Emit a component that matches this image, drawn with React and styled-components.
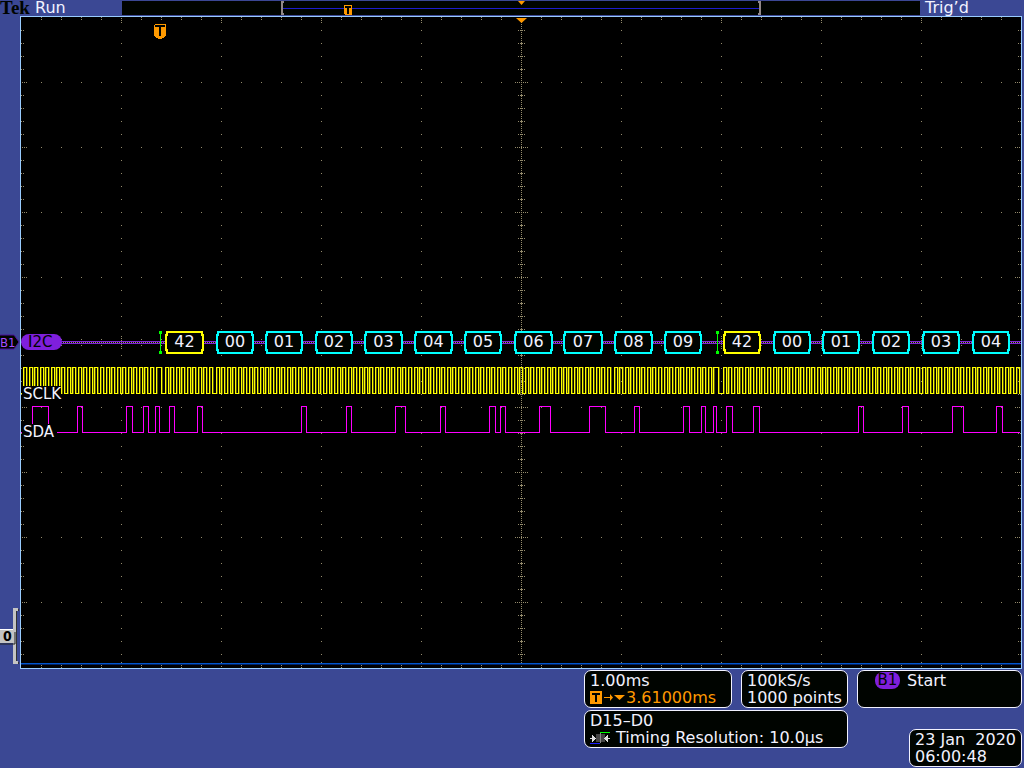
import React from 'react';
import styled, { createGlobalStyle } from 'styled-components';

const color = {
  chassis: '#3b4894',
  ink: '#f2f2ff',
  panel: '#000400',
  frame: '#99ccff',
  dot: '#948b6c',
  orange: '#ff9900',
  purple: '#7f1fdd',
  yellow: '#ffff00',
  cyan: '#00ffff',
  magenta: '#ff00ff',
  green: '#00ff00',
};

const sans = '"DejaVu Sans", "Liberation Sans", sans-serif';

const GlobalStyle = createGlobalStyle`
  * { box-sizing: border-box; }
  body {
    margin: 0;
    background: ${color.chassis};
    color: ${color.ink};
    font-family: ${sans};
    font-size: 16px;
    line-height: 16px;
  }
`;

const Screen = styled.main`
  display: flex;
  flex-direction: column;
  min-height: 100vh;
  background: ${color.chassis};
`;

const Header = styled.header`
  display: grid;
  grid-template-columns: 122px 1fr 104px;
  height: 16px;
  white-space: nowrap;
`;

const Brand = styled.div`
  display: flex;
  gap: 4px;
`;

const Logo = styled.span`
  width: 31px;
  color: ${color.panel};
  font-family: "Liberation Serif", serif;
  font-size: 19px;
  font-weight: bold;
`;

const RunState = styled.span`
  line-height: 15px;
`;

const TriggerState = styled.span`
  padding-left: 5px;
  line-height: 15px;
`;

const Overview = styled.svg`
  display: block;
  width: 100%;
  height: 14px;
  margin-top: 1px;
  background: ${color.panel};
`;

const Scope = styled.section`
  display: grid;
  grid-template-columns: 20px 1fr;
  padding-right: 2px;
`;

const Rail = styled.aside`
  display: grid;
  grid-template-rows: 1fr 17px 1fr;
`;

const BusHandle = styled.svg`
  grid-row: 2;
  display: block;
`;

const GroupHandle = styled.svg`
  grid-row: 3;
  align-self: end;
  display: block;
  margin-bottom: 4px;
`;

const PlotFrame = styled.div`
  border: 1px solid ${color.frame};
  background: #000;
`;

const Plot = styled.svg`
  display: block;
  width: 100%;
  height: auto;
`;

const Footer = styled.footer`
  display: flex;
  align-items: flex-start;
  justify-content: flex-end;
  gap: 9px;
  padding: 1px 2px 2px;
`;

const Readouts = styled.div`
  display: grid;
  grid-template-columns: 148px 107px;
  gap: 2px 9px;
`;

const SideColumn = styled.div`
  display: flex;
  flex-direction: column;
  align-items: flex-end;
  gap: 21px;
`;

const Box = styled.div`
  grid-column: ${(p) => (p.$wide ? '1 / -1' : 'auto')};
  width: ${(p) => p.$width || 'auto'};
  height: 38px;
  padding: 1px 0 0 5px;
  border: 1px solid ${color.ink};
  border-radius: 7px;
  background: ${color.panel};
  white-space: pre;
`;

const Line = styled.div`
  display: flex;
  align-items: center;
  height: 17px;
  gap: ${(p) => p.$gap || '0'};
  color: ${(p) => (p.$accent ? color.orange : 'inherit')};
`;

const EventLine = styled(Line)`
  padding-left: 12px;
`;

const BusBadge = styled.span`
  width: 25px;
  height: 17px;
  border-radius: 8px;
  background: ${color.purple};
  color: ${color.panel};
  font-size: 15px;
  line-height: 17px;
  text-align: center;
`;

/* Plot units: 100 per horizontal division, 65 per vertical division. */
const W = 1000;
const H = 651;
const CX = 500;
const CY = 325;

function graticulePath() {
  let d = '';
  const dot = (x, y) => {
    d += `M${x} ${y}h1v1h-1z`;
  };
  for (let y = 13; y < 650; y += 13) {
    const major = y % 65 === 0;
    for (let x = 100; x < W; x += 100) dot(x, y);
    if (major) for (let x = 20; x < W; x += 20) dot(x, y);
    (major ? [1, 3, 5] : [0, 2]).forEach((x) => {
      dot(x, y);
      dot(W - 1 - x, y);
    });
    (major ? [-6, -4, -2, 2, 4, 6] : [-3, -1, 1, 3]).forEach((o) => dot(CX + o, y));
  }
  for (let x = 20; x < W; x += 20) {
    const major = x % 100 === 0;
    (major ? [1, 3, 5] : [0, 2]).forEach((y) => {
      dot(x, y);
      dot(x, H - 1 - y);
    });
    (major ? [-6, -4, -2, 2, 4, 6] : [-3, 3]).forEach((o) => dot(x, CY + o));
  }
  for (let y = 1; y < H; y += 2) dot(CX, y);
  for (let x = 0; x < W; x += 2) dot(x, CY);
  return d;
}

function pulsePath(pulses, high, low, end) {
  return (
    pulses.reduce((d, [rise, fall]) => `${d}H${rise + 0.5}V${high}H${fall + 0.5}V${low}`, `M0 ${low}`) + `H${end}`
  );
}

const packets = [
  [144, 39, '42', true],
  [195, 38, '00'],
  [244, 38, '01'],
  [294, 38, '02'],
  [343, 39, '03'],
  [393, 39, '04'],
  [443, 38, '05'],
  [493, 39, '06'],
  [542, 40, '07'],
  [593, 39, '08'],
  [643, 38, '09'],
  [702, 38, '42', true],
  [752, 38, '00'],
  [801, 38, '01'],
  [851, 38, '02'],
  [901, 38, '03'],
  [951, 38, '04'],
];

const starts = [139, 696];

const byteStarts = [-14, 35, 85, ...packets.map((p) => p[0])];

const clock = byteStarts
  .flatMap((s) => Array.from({ length: 9 }, (_, i) => Math.round(s + i * 5.45)).map((x) => [x, x + 3]))
  .concat([
    [135, 140],
    [692, 697],
  ])
  .filter(([x]) => x >= 0 && x < 997)
  .sort((a, b) => a[0] - b[0]);

const data = [
  [11, 27], [56, 61], [105, 111], [122, 127], [134, 138], [148, 153], [176, 181],
  [280, 285], [325, 330], [374, 384], [419, 424], [468, 474], [479, 484], [518, 529],
  [568, 584], [613, 618], [662, 668], [680, 684], [692, 695], [705, 711], [732, 738],
  [837, 842], [881, 887], [931, 942], [975, 981],
];

const clockPath = pulsePath(clock, 350.5, 376.5, 998);
const dataPath = pulsePath(data, 389.5, 415.5, 999);

function Graticule() {
  return <path d={graticulePath()} fill={color.dot} shapeRendering="crispEdges" />;
}

function Packet({ x, width, value, address }) {
  const r = x + width;
  return (
    <g>
      <path
        d={`M${x + 2} 315H${r - 2}V318H${r - 1}V333H${r - 2}V336H${x + 2}V333H${x + 1}V318H${x + 2}Z`}
        fill={color.panel}
        stroke={address ? color.yellow : color.cyan}
        strokeWidth="2"
        shapeRendering="crispEdges"
      />
      <text x={x + width / 2} y="330" textAnchor="middle" fill={color.ink} fontSize="16">
        {value}
      </text>
    </g>
  );
}

function Waveforms() {
  return (
    <g fontFamily={sans} fontSize="15">
      <g shapeRendering="crispEdges">
        <path d="M40 324.5H1000M40 326.5H1000" stroke={color.purple} />
        {starts.map((x) => (
          <path key={x} d={`M${x} 315h1v22h-1zM${x - 1} 314h3v3h-3zM${x - 1} 334h3v3h-3z`} fill={color.green} />
        ))}
      </g>
      {packets.map(([x, width, value, address]) => (
        <Packet key={x} x={x} width={width} value={value} address={address} />
      ))}
      <rect x="0" y="317" width="41" height="16" rx="8" fill={color.purple} />
      <text x="7" y="330" fill={color.panel}>I2C</text>
      <g fill="none" shapeRendering="crispEdges">
        <path d={clockPath} stroke="#5c5c00" transform="translate(1 0)" />
        <path d={clockPath} stroke={color.yellow} />
        <path d={dataPath} stroke={color.magenta} />
      </g>
      <rect x="1" y="369" width="39" height="15" fill="#000" />
      <text x="2" y="382" fill={color.ink}>SCLK</text>
      <rect x="1" y="407" width="35" height="15" fill="#000" />
      <text x="2" y="420" fill={color.ink}>SDA</text>
    </g>
  );
}

function TriggerIcon({ small }) {
  return small ? (
    <svg width="12" height="13" viewBox="0 0 12 13" aria-hidden="true" shapeRendering="crispEdges">
      <rect width="12" height="13" rx="1" fill={color.orange} />
      <path d="M2 3H10M6 3V11" stroke={color.panel} strokeWidth="2" />
    </svg>
  ) : (
    <g transform="translate(133 7)" shapeRendering="crispEdges">
      <path d="M1 0H11L12 1V12L9 14L7 15H5L3 14L0 12V1Z" fill={color.orange} />
      <path d="M1 2H11M6 2V12" stroke={color.panel} strokeWidth="2" />
    </g>
  );
}

function PlotView() {
  return (
    <Plot viewBox={`0 0 ${W} ${H}`} role="img" aria-label="I2C bus, SCLK and SDA waveforms">
      <Graticule />
      <path d="M0 646.5H1000" stroke="#0055cc" shapeRendering="crispEdges" />
      <path d="M0 647.5H1000" stroke="#002266" shapeRendering="crispEdges" />
      <Waveforms />
      <TriggerIcon />
      <path d="M495 1H506L500.5 6Z" fill={color.orange} />
    </Plot>
  );
}

function RecordOverview() {
  return (
    <Overview viewBox="0 0 798 14" aria-hidden="true">
      <g shapeRendering="crispEdges">
        <path d="M161 7.5H637" stroke="#1c1ccc" />
        <path d="M162 1H160V13H162M636 1H638V13H636" fill="none" stroke="#928888" strokeWidth="2" />
        <path d="M222 4H230V13L229 14H223L222 13Z" fill={color.orange} />
        <path d="M223 6H229M226 6V13" stroke={color.panel} strokeWidth="2" />
      </g>
      <path d="M396 0H403L399.5 4Z" fill={color.orange} />
    </Overview>
  );
}

export default function App() {
  return (
    <>
      <GlobalStyle />
      <Screen>
        <Header>
          <Brand>
            <Logo>Tek</Logo>
            <RunState>Run</RunState>
          </Brand>
          <RecordOverview />
          <TriggerState>Trig’d</TriggerState>
        </Header>

        <Scope>
          <Rail>
            <BusHandle width="20" height="17" viewBox="0 0 20 17">
              <path d="M0 1H14L19 8L14 15H0" fill={color.panel} stroke="#4a1299" />
              <text x="0" y="13" fill="#a64dff" fontFamily={'"DejaVu Sans Condensed", sans-serif'} fontSize="13">B1</text>
            </BusHandle>
            <GroupHandle width="20" height="57" viewBox="0 0 20 57">
              <path d="M19 2H16V55H19" fill="none" stroke="#333" strokeWidth="2" />
              <path d="M18 1.5H14.5V54.5H18" fill="none" stroke="#c4c4c4" strokeWidth="3" />
              <path d="M0 36H15V24" fill="none" stroke="#222" />
              <rect x="0" y="22" width="14" height="13" fill="#c4c4c4" />
              <path d="M0 21.5H13" stroke="#fff" />
              <text x="3" y="33" fill="#000" fontFamily={'"DejaVu Sans Condensed", sans-serif'} fontSize="14" fontWeight="bold">0</text>
            </GroupHandle>
          </Rail>
          <PlotFrame>
            <PlotView />
          </PlotFrame>
        </Scope>

        <Footer>
          <Readouts>
            <Box>
              <Line>1.00ms</Line>
              <Line $accent>
                <TriggerIcon small />
                <svg width="24" height="13" viewBox="0 0 24 13" aria-hidden="true">
                  <path d="M2 6H8V3L11 6.5L8 10V7H2ZM12 4H23L17.5 9Z" fill={color.orange} />
                </svg>
                3.61000ms
              </Line>
            </Box>
            <Box>
              <Line>100kS/s</Line>
              <Line>1000 points</Line>
            </Box>
            <Box $wide>
              <Line>D15–D0</Line>
              <Line $gap="6px">
                <svg width="20" height="13" viewBox="0 0 20 13" aria-hidden="true" shapeRendering="crispEdges">
                  <rect x="6" y="3" width="9" height="8" fill="#444" />
                  <path d="M0 7.5H3M17 7.5H20" stroke="#ddd" />
                  <path d="M2 4L6 7.5L2 11ZM18 4L14 7.5L18 11Z" fill="#ddd" />
                  <path d="M0 12.5H10" stroke="#1c1cff" />
                  <path d="M10.5 12V2" stroke="#888" />
                  <path d="M10 1H20V2H10Z" fill={color.green} />
                </svg>
                Timing Resolution: 10.0µs
              </Line>
            </Box>
          </Readouts>
          <SideColumn>
            <Box $width="165px">
              <EventLine $gap="7px">
                <BusBadge>B1</BusBadge>
                Start
              </EventLine>
            </Box>
            <Box $width="113px">
              <Line>23 Jan  2020</Line>
              <Line>06:00:48</Line>
            </Box>
          </SideColumn>
        </Footer>
      </Screen>
    </>
  );
}
